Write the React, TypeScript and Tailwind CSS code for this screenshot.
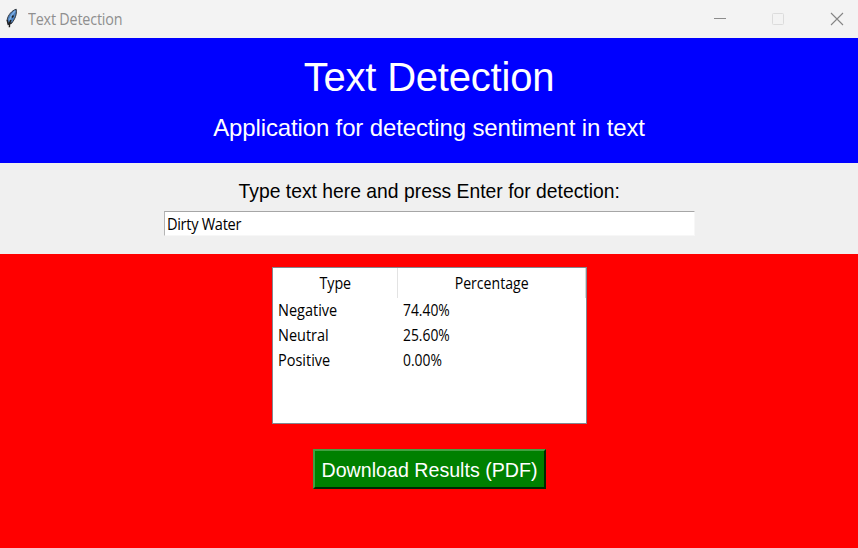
const rows = [
  { type: "Negative", value: "74.40%" },
  { type: "Neutral", value: "25.60%" },
  { type: "Positive", value: "0.00%" },
];

const ui = "font-['Open_Sans','Noto_Sans',sans-serif]";
const arial = "font-['Liberation_Sans',Arial,sans-serif]";

function Feather() {
  return (
    <svg width="14" height="22" viewBox="0 0 14 22" className="block shrink-0">
      <path d="M11.2 1.2 C7 2.5 3 6.8 2.1 12 L3.5 16.2 L6.8 15 C10 11 12 6.5 11.2 1.2 Z" fill="#4f83c0" stroke="#30363e" strokeWidth="1" />
      <path d="M10 3 C7.5 5.5 5.6 8 4.6 12" fill="none" stroke="#7fb0e4" strokeWidth="1.4" />
      <path d="M8.5 7.5 L7 9.5 M6 12 L4.6 15 L4.4 19.3" fill="none" stroke="#1d1d1d" strokeWidth="1.4" />
      <path d="M2.2 12 L3.2 16.3 L6.5 15" fill="none" stroke="#1f2227" strokeWidth="1.5" />
    </svg>
  );
}

export default function App() {
  return (
    <div className={`flex h-[548px] w-[858px] flex-col overflow-hidden bg-[#ff0000] text-black ${ui}`}>
      <header className="flex h-[38px] shrink-0 items-center bg-[#f3f3f3] pl-[5px]">
        <Feather />
        <span className="mb-px ml-[9px] origin-left scale-x-[0.925] text-[15.5px] leading-5 tracking-[-0.2px] text-[#8f8f8f]">Text Detection</span>
        <div className="ml-auto flex items-center pr-[14px]">
          <svg width="14" height="14" viewBox="0 0 14 14" className="mr-[44px]">
            <path d="M1 6.5 H13" stroke="#8c8c8c" />
          </svg>
          <svg width="14" height="14" viewBox="0 0 14 14" className="mr-[45px]">
            <rect x="1.5" y="1.5" width="11" height="11" rx="1" fill="none" stroke="#dcdcdc" />
          </svg>
          <svg width="14" height="14" viewBox="0 0 14 14">
            <path d="M1 1 L13 13 M13 1 L1 13" stroke="#858585" strokeWidth="1.1" />
          </svg>
        </div>
      </header>

      <section className={`flex h-[125px] shrink-0 flex-col items-center bg-[#0000ff] text-white ${arial}`}>
        <h1 className="mt-[16px] text-[40px] leading-[46px] tracking-[-0.2px]">Text Detection</h1>
        <p className="mt-[14px] text-[24px] leading-[28px] tracking-[-0.14px]">Application for detecting sentiment in text</p>
      </section>

      <section className="flex h-[91px] shrink-0 flex-col items-center bg-[#f0f0f0]">
        <label htmlFor="source" className={`mt-[16px] scale-x-[0.92] text-[21px] leading-6 ${arial}`}>
          Type text here and press Enter for detection:
        </label>
        <div className="mt-[8px] h-[25px] w-[531px] border border-t-[#a6a6a6] border-r-[#f7f7f7] border-b-[#f7f7f7] border-l-[#b5b5b5] bg-white">
          <input
            id="source"
            defaultValue="Dirty Water"
            className="block h-[23px] w-[540px] origin-left scale-x-[0.94] bg-transparent pt-px pl-[2px] text-[15.5px] leading-5 tracking-[-0.3px] outline-none"
          />
        </div>
      </section>

      <main className="flex flex-1 flex-col items-center pt-[13px]">
        <div className="h-[157px] w-[315px] border border-[#828790] bg-white text-[15.5px]">
          <div className="flex h-[30px] items-center">
            <div className="flex h-full w-[125px] items-center justify-center border-r border-[#e3e3e3] pt-[2px]">
              <span className="ml-[2px] scale-x-[0.92]">Type</span>
            </div>
            <div className="flex h-full flex-1 items-center justify-center border-r border-[#d5d5d5] pt-[2px]">
              <span className="ml-[2px] scale-x-[0.91]">Percentage</span>
            </div>
          </div>
          {rows.map((row) => (
            <div key={row.type} className="flex h-[25px] items-center">
              <div className="w-[125px] pl-[5px]">
                <span className="inline-block origin-left scale-x-[0.935]">{row.type}</span>
              </div>
              <span className="ml-[5px] origin-left scale-x-[0.895]">{row.value}</span>
            </div>
          ))}
        </div>
        <button className={`mt-[25px] flex h-[40px] w-[233px] items-center justify-center border-2 border-t-[#42a042] border-r-[#002800] border-b-[#002800] border-l-[#42a042] bg-[#008000] pt-px text-[21px] leading-6 whitespace-nowrap text-white ${arial}`}>
          <span className="mt-px ml-[2px] scale-x-[0.935]">Download Results (PDF)</span>
        </button>
      </main>
    </div>
  );
}
